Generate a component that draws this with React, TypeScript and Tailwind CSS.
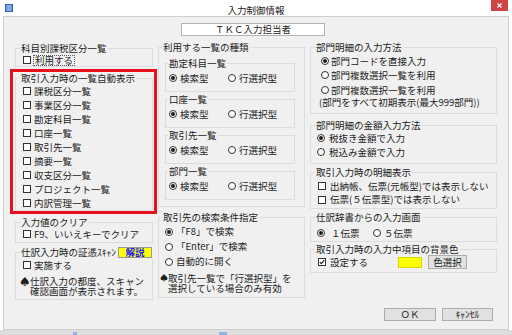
import React from 'react';

const AUTO_LISTS = [
  '課税区分一覧',
  '事業区分一覧',
  '勘定科目一覧',
  '口座一覧',
  '取引先一覧',
  '摘要一覧',
  '収支区分一覧',
  'プロジェクト一覧',
  '内訳管理一覧',
];

const LIST_KINDS = ['勘定科目一覧', '口座一覧', '取引先一覧', '部門一覧'];

function Check({ checked = false }: { checked?: boolean }) {
  return (
    <span className="w-[8px] h-[8px] shrink-0 border border-[#333] bg-white flex items-center justify-center">
      {checked && (
        <svg width="6" height="6" viewBox="0 0 6 6">
          <path d="M0.8 3.1 L2.4 4.7 L5.3 1.1" fill="none" stroke="#1a1a1a" strokeWidth="1.1" />
        </svg>
      )}
    </span>
  );
}

function Radio({ on = false }: { on?: boolean }) {
  return (
    <span className="w-[8px] h-[8px] shrink-0 rounded-full border border-[#333] bg-white flex items-center justify-center">
      {on && <span className="w-[4px] h-[4px] rounded-full bg-[#1a1a1a]" />}
    </span>
  );
}

interface GroupProps {
  label: React.ReactNode;
  className?: string;
  legendClass?: string;
  children?: React.ReactNode;
}

// windows style group box: the legend cuts the top border
function Group({ label, className = '', legendClass = 'ml-[4px]', children }: GroupProps) {
  return (
    <fieldset className={`border border-[#dcdcdc] min-w-0 ${className}`}>
      <legend className={`${legendClass} px-[1px] h-[12px] leading-[12px] whitespace-nowrap`}>{label}</legend>
      {children}
    </fieldset>
  );
}

function AppIcon() {
  return (
    <svg width="8" height="8" viewBox="0 0 8 8">
      <rect x="0" y="0" width="8" height="8" fill="#2f66c2" />
      <path d="M1 2 H7 M1 4 H7 M1 6 H7 M3 1 V7 M5 1 V7" stroke="#cfe0ff" strokeWidth="0.7" />
    </svg>
  );
}

export default function App() {
  return (
    <div className="w-[512px] h-[335px] bg-white flex flex-col overflow-hidden text-[#1c1c1c] text-[9.5px] font-['Noto_Sans_CJK_JP','Noto_Sans',sans-serif]">
      {/* title bar */}
      <div className="h-[16px] shrink-0 flex items-start">
        <div className="w-[21px] pl-[5px] pt-[4px]">
          <AppIcon />
        </div>
        <div className="flex-1 text-center leading-[12px] pt-[4px] text-[#222]">入力制御情報</div>
        <div className="w-[21px] pr-[4px]">
          <div className="w-[17px] h-[11px] bg-[#cc4444] flex items-center justify-center">
            <svg width="5" height="5" viewBox="0 0 5 5">
              <path d="M0.5 0.5 L4.5 4.5 M4.5 0.5 L0.5 4.5" stroke="#fff" strokeWidth="1.1" />
            </svg>
          </div>
        </div>
      </div>

      {/* dialog body */}
      <div className="ml-[3px] w-[506px] h-[314px] shrink-0 border border-[#cfcfcf] bg-[#f0f0f0] flex flex-col">
        <div className="mt-[6px] ml-[177px] w-[144px] h-[13px] bg-white border border-[#b4b4b4] text-center leading-[11px]">
          ＴＫＣ入力担当者
        </div>

        <div className="flex items-start">
          {/* left column */}
          <div className="ml-[6px] w-[147px] flex flex-col">
            <Group label="科目別課税区分一覧" className="mt-[6px] ml-[5px] mr-[4px]">
              <div className="h-[12px] flex items-center gap-[2px] pl-[7px]">
                <Check />
                <span className="border border-dotted border-[#555] px-[1px] leading-[9px]">利用する</span>
              </div>
            </Group>

            <div className="mt-[2px] border-[3px] border-[#e8101c] pl-[2px] pr-[1px]">
              <Group label="取引入力時の一覧自動表示">
                {AUTO_LISTS.map(name => (
                  <div key={name} className="h-[14px] flex items-center gap-[3px] pl-[7px] whitespace-nowrap">
                    <Check />
                    <span>{name}</span>
                  </div>
                ))}
              </Group>
            </div>

            <Group label="入力値のクリア" className="mt-[2px] ml-[5px] mr-[4px] pb-[2px]">
              <div className="h-[12px] flex items-center gap-[3px] pl-[7px] whitespace-nowrap">
                <Check />
                <span>F9、いいえキーでクリア</span>
              </div>
            </Group>

            <Group
              label={
                <span className="flex items-center gap-[2px]">
                  <span>仕訳入力時の証憑ｽｷｬﾝ</span>
                  <span className="w-[34px] h-[11px] bg-[#ffff00] border border-[#9a9a9a] text-[#1a1aff] font-bold text-center leading-[9px]">
                    解説
                  </span>
                </span>
              }
              className="mt-[3px] ml-[5px] mr-[4px] pb-[3px]"
            >
              <div className="h-[14px] flex items-center gap-[3px] pl-[7px]">
                <Check />
                <span>実施する</span>
              </div>
              <div className="mt-[4px] flex pl-[4px] leading-[10px]">
                <span className="w-[10px] shrink-0">♠</span>
                <span>
                  仕訳入力の都度、スキャン
                  <br />
                  確認画面が表示されます。
                </span>
              </div>
            </Group>
          </div>

          {/* middle column */}
          <div className="ml-[1px] w-[147px] flex flex-col">
            <Group label="利用する一覧の種類" className="mt-[5px] pb-[6px]" legendClass="ml-[3px]">
              {LIST_KINDS.map((name, i) => (
                <Group
                  key={name}
                  label={name}
                  legendClass="ml-[2px]"
                  className={`ml-[6px] w-[130px] pt-[3px] pb-[7px] ${i === 0 ? 'mt-[4px]' : 'mt-[1px]'}`}
                >
                  <div className="h-[12px] flex items-center pl-[3px] whitespace-nowrap">
                    <div className="w-[59px] flex items-center gap-[3px]">
                      <Radio on />
                      <span>検索型</span>
                    </div>
                    <div className="flex items-center gap-[3px]">
                      <Radio />
                      <span>行選択型</span>
                    </div>
                  </div>
                </Group>
              ))}
            </Group>

            <Group label="取引先の検索条件指定" className="mt-[4px] pt-[1px] pb-[4px]" legendClass="ml-[3px]">
              {[
                { text: '「F8」で検索', on: true },
                { text: '「Enter」で検索', on: false },
                { text: '自動的に開く', on: false },
              ].map(r => (
                <div key={r.text} className="h-[15px] flex items-center gap-[3px] pl-[6px] whitespace-nowrap">
                  <Radio on={r.on} />
                  <span>{r.text}</span>
                </div>
              ))}
              <div className="mt-[4px] flex pl-[1px] leading-[10px] whitespace-nowrap">
                <span className="w-[8px] shrink-0 text-[8px]">♠</span>
                <span>
                  取引先一覧で「行選択型」を
                  <br />
                  選択している場合のみ有効
                </span>
              </div>
            </Group>
          </div>

          {/* right column */}
          <div className="ml-[5px] w-[187px] flex flex-col">
            <Group label="部門明細の入力方法" className="mt-[5px] pt-[1px] pb-[6px]">
              <div className="h-[14px] flex items-center gap-[2px] pl-[10px]">
                <Radio on />
                <span>部門コードを直接入力</span>
              </div>
              <div className="h-[14px] flex items-center gap-[2px] pl-[10px]">
                <Radio />
                <span>部門複数選択一覧を利用</span>
              </div>
              <div className="mt-[1px] h-[14px] flex items-center gap-[2px] pl-[10px]">
                <Radio />
                <span>部門複数選択一覧を利用</span>
              </div>
              <div className="h-[10px] leading-[10px] pl-[8px] whitespace-nowrap">(部門をすべて初期表示(最大999部門))</div>
            </Group>

            <Group label="部門明細の金額入力方法" className="mt-[5px] pb-[4px]">
              <div className="h-[14px] flex items-center gap-[4px] pl-[6px]">
                <Radio on />
                <span>税抜き金額で入力</span>
              </div>
              <div className="h-[14px] flex items-center gap-[4px] pl-[6px]">
                <Radio />
                <span>税込み金額で入力</span>
              </div>
            </Group>

            <Group label="取引入力時の明細表示" className="mt-[2px] pt-[1px] pb-[2px]">
              <div className="h-[14px] flex items-center gap-[4px] pl-[7px] whitespace-nowrap">
                <Check />
                <span>出納帳、伝票(元帳型)では表示しない</span>
              </div>
              <div className="h-[13px] flex items-center gap-[4px] pl-[7px] whitespace-nowrap">
                <Check />
                <span>伝票(５伝票型)では表示しない</span>
              </div>
            </Group>

            <Group label="仕訳辞書からの入力画面" className="mt-[2px] pt-[3px] pb-[1px]">
              <div className="h-[14px] flex items-center pl-[6px] whitespace-nowrap">
                <div className="w-[56px] flex items-center gap-[6px]">
                  <Radio on />
                  <span>１伝票</span>
                </div>
                <div className="flex items-center gap-[3px]">
                  <Radio />
                  <span>５伝票</span>
                </div>
              </div>
            </Group>

            <Group label="取引入力時の入力中項目の背景色" className="mt-[1px] pb-[3px]">
              <div className="h-[14px] flex items-center pl-[7px] whitespace-nowrap">
                <div className="w-[80px] flex items-center gap-[4px]">
                  <Check checked />
                  <span>設定する</span>
                </div>
                <span className="w-[24px] h-[11px] bg-[#ffff00] border border-[#d6d600]" />
                <button
                  type="button"
                  className="ml-[6px] w-[39px] h-[14px] bg-[#e1e1e1] border border-[#adadad] leading-[12px] text-center"
                >
                  色選択
                </button>
              </div>
            </Group>

            <div className="mt-[35px] pr-[4px] flex justify-end gap-[6px]">
              <button
                type="button"
                className="w-[52px] h-[13px] bg-[#e1e1e1] border border-[#adadad] leading-[11px] text-center"
              >
                ＯＫ
              </button>
              <button
                type="button"
                className="w-[51px] h-[13px] bg-[#e1e1e1] border border-[#adadad] leading-[11px] text-center"
              >
                ｷｬﾝｾﾙ
              </button>
            </div>
          </div>
        </div>
      </div>

      {/* desktop strip under the dialog */}
      <div className="h-[5px] shrink-0 bg-[#dedede] flex items-end">
        <span className="ml-[73px] w-[4px] h-[3px] bg-[#8fb3e6]" />
        <span className="ml-[142px] w-[8px] h-[3px] bg-[#8fb3e6]" />
      </div>
    </div>
  );
}
